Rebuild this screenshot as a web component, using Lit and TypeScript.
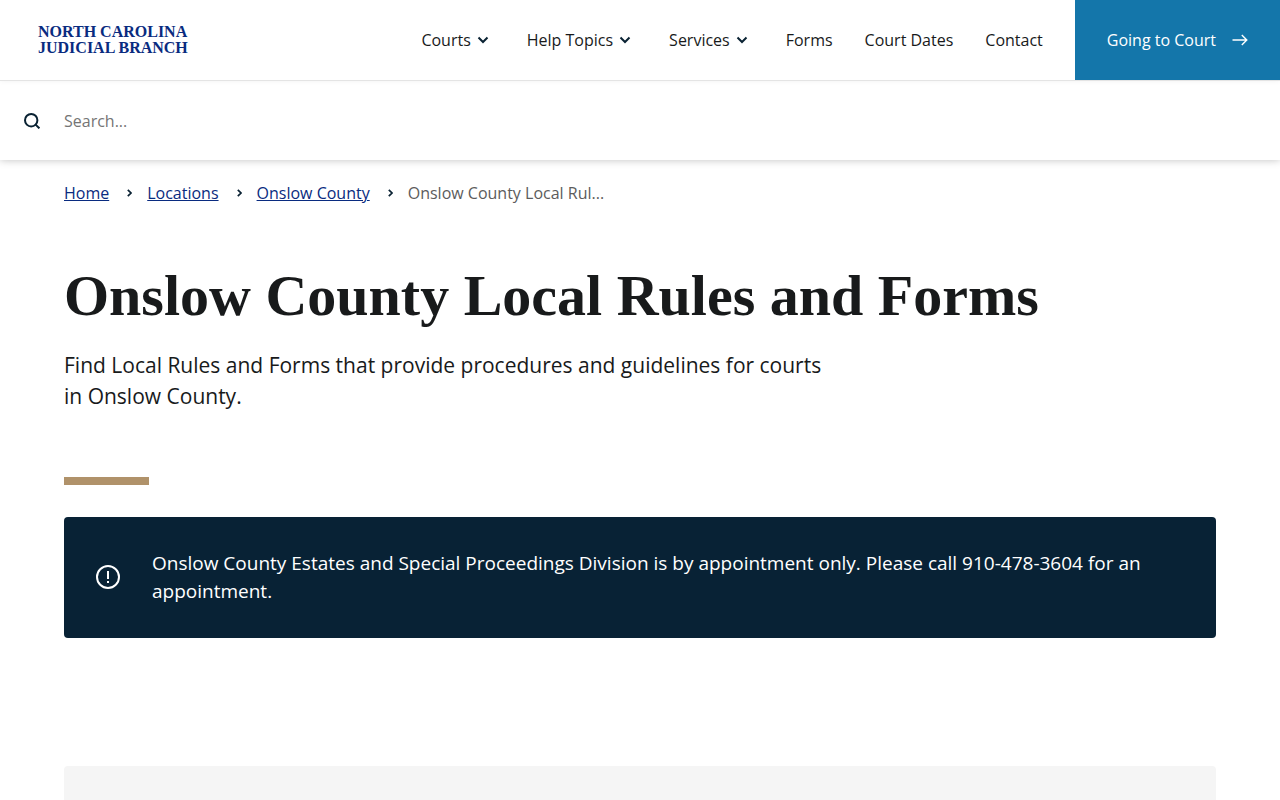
import { LitElement, html, css, svg } from "lit";
import { customElement } from "lit/decorators.js";

interface NavItem {
  label: string;
  menu?: boolean;
}

const NAV: NavItem[] = [
  { label: "Courts", menu: true },
  { label: "Help Topics", menu: true },
  { label: "Services", menu: true },
  { label: "Forms" },
  { label: "Court Dates" },
  { label: "Contact" },
];

const CRUMBS = ["Home", "Locations", "Onslow County"];

const chevronDown = svg`<path d="M1.5 1.5 6 6l4.5-4.5" />`;
const chevronRight = svg`<path d="m.8.8 3.2 3.2-3.2 3.2" />`;

@customElement("app-root")
export class AppRoot extends LitElement {
  static styles = css`
    :host {
      display: flex;
      flex-direction: column;
      min-height: 100vh;
      background: #fff;
      color: #181a1b;
      font: 400 16px/24px "Open Sans", sans-serif;
    }
    * {
      box-sizing: border-box;
    }
    svg {
      display: block;
      flex: none;
      fill: none;
      stroke: currentColor;
    }
    a {
      color: inherit;
      text-decoration: none;
    }
    .masthead {
      box-shadow: 0 0 8px rgba(0, 0, 0, 0.25);
    }
    .bar {
      display: flex;
      align-items: stretch;
      justify-content: space-between;
      height: 80px;
      box-shadow: 0 0 6px rgba(0, 0, 0, 0.08);
    }
    .logo {
      align-self: center;
      margin-left: 38px;
      color: #092b80;
      font: 700 16px/16px "Liberation Serif", serif;
      text-transform: uppercase;
    }
    .logo span {
      display: block;
    }
    .right,
    .nav {
      display: flex;
      align-items: stretch;
    }
    .right {
      gap: 32px;
    }
    .nav {
      gap: 32px;
      margin: 0;
      padding: 0;
      list-style: none;
    }
    .item {
      display: flex;
      align-items: center;
    }
    .menu {
      display: flex;
      align-items: center;
      gap: 6px;
      margin: 0;
      padding: 0 6px 0 0;
      border: 0;
      background: none;
      color: inherit;
      font: inherit;
      cursor: pointer;
    }
    .menu svg {
      color: #0a2233;
      stroke-width: 2;
    }
    .cta {
      display: flex;
      align-items: center;
      gap: 16px;
      padding: 0 32px;
      background: #1476aa;
      color: #fff;
      font-weight: 500;
    }
    .search {
      display: flex;
      align-items: center;
      height: 80px;
      padding: 0 24px;
      gap: 24px;
      border-top: 1px solid #e4e4e4;
    }
    .submit {
      padding: 0;
      border: 0;
      background: none;
      color: #0a2233;
      cursor: pointer;
    }
    .field {
      flex: 1;
      min-width: 0;
      padding: 0;
      border: 0;
      outline: 0;
      background: none;
      color: inherit;
      font: inherit;
    }
    .field::placeholder {
      color: #757575;
      opacity: 1;
    }
    .content {
      display: flex;
      flex: 1;
      flex-direction: column;
      padding: 21px 64px 0;
    }
    .crumbs {
      display: flex;
      align-items: center;
      gap: 15px;
      margin: 0;
      padding: 0;
      list-style: none;
    }
    .crumb {
      display: flex;
      align-items: center;
      gap: 18px;
    }
    .crumb a {
      color: #092b80;
      text-decoration: underline;
    }
    .crumb svg {
      color: #0a2233;
      stroke-width: 1.7;
    }
    .current {
      color: #5c5c5c;
    }
    h1 {
      margin: 55px 0 0;
      font: 700 58px/72px "Liberation Serif", serif;
    }
    .intro {
      max-width: 768px;
      margin: 18px 0 0;
      font-size: 21px;
      line-height: 31px;
    }
    .rule {
      width: 85px;
      height: 8px;
      margin: 65px 0 32px;
      border: 0;
      background: #b0926a;
    }
    .alert {
      display: flex;
      align-items: center;
      gap: 32px;
      padding: 32px 32px 33px;
      border-radius: 4px;
      background: #082235;
      color: #fff;
      font-size: 19px;
      font-weight: 500;
      line-height: 28px;
    }
    .alert p {
      margin: 0;
    }
    .panel {
      flex: 1;
      margin-top: 128px;
      border-radius: 4px 4px 0 0;
      background: #f5f5f5;
    }
  `;

  private renderNavItem(item: NavItem) {
    return html`<li class="item">
      ${item.menu
        ? html`<button class="menu" type="button">
            ${item.label}
            <svg width="12" height="8" viewBox="0 0 12 8" aria-hidden="true">${chevronDown}</svg>
          </button>`
        : html`<a href="#">${item.label}</a>`}
    </li>`;
  }

  render() {
    return html`
      <header class="masthead">
        <div class="bar">
          <a class="logo" href="#"><span>North Carolina</span><span>Judicial Branch</span></a>
          <nav class="right">
            <ul class="nav">${NAV.map((item) => this.renderNavItem(item))}</ul>
            <a class="cta" href="#">
              Going to Court
              <svg width="16" height="12" viewBox="0 0 16 12" stroke-width="1.4" aria-hidden="true">
                <path d="M.5 6h14.3M9.8 1l5 5-5 5" />
              </svg>
            </a>
          </nav>
        </div>
        <form class="search" role="search">
          <button class="submit" type="button" aria-label="Submit search">
            <svg width="16" height="16" viewBox="0 0 16 16" stroke-width="2" aria-hidden="true">
              <circle cx="7.2" cy="7.2" r="6.2" />
              <path d="m11.4 11.4 4 4" />
            </svg>
          </button>
          <input class="field" type="search" placeholder="Search..." aria-label="Search" />
        </form>
      </header>
      <main class="content">
        <nav aria-label="Breadcrumb">
          <ol class="crumbs">
            ${CRUMBS.map(
              (label) => html`<li class="crumb">
                <a href="#">${label}</a>
                <svg width="5" height="8" viewBox="0 0 5 8" aria-hidden="true">${chevronRight}</svg>
              </li>`
            )}
            <li class="current" aria-current="page">Onslow County Local Rul...</li>
          </ol>
        </nav>
        <h1>Onslow County Local Rules and Forms</h1>
        <p class="intro">
          Find Local Rules and Forms that provide procedures and guidelines for courts in Onslow
          County.
        </p>
        <hr class="rule" />
        <div class="alert" role="alert">
          <svg width="24" height="24" viewBox="0 0 24 24" stroke-width="2" aria-hidden="true">
            <circle cx="12" cy="12" r="11" />
            <path d="M12 6v8M12 16v2" />
          </svg>
          <p>
            Onslow County Estates and Special Proceedings Division is by appointment only. Please
            call 910-478-3604 for an appointment.
          </p>
        </div>
        <section class="panel"></section>
      </main>
    `;
  }
}
